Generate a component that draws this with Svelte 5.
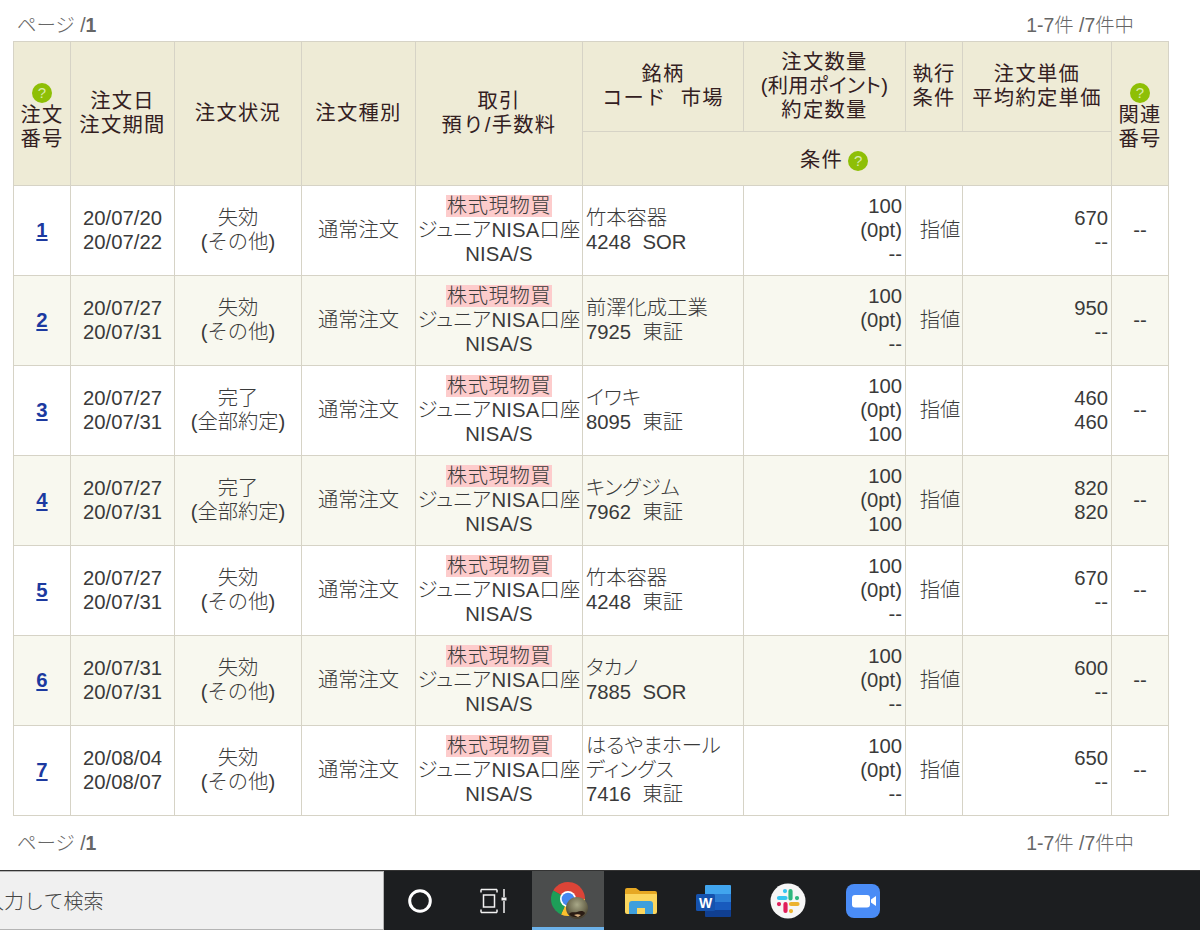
<script lang="ts">
  interface Order {
    no: number;
    from: string;
    to: string;
    status: string;
    detail: string;
    name: string;
    code: string;
    market: string;
    filled: string;
    price: string;
    avg: string;
  }

  const orders: Order[] = [
    { no: 1, from: "20/07/20", to: "20/07/22", status: "失効", detail: "(その他)", name: "竹本容器", code: "4248", market: "SOR", filled: "--", price: "670", avg: "--" },
    { no: 2, from: "20/07/27", to: "20/07/31", status: "失効", detail: "(その他)", name: "前澤化成工業", code: "7925", market: "東証", filled: "--", price: "950", avg: "--" },
    { no: 3, from: "20/07/27", to: "20/07/31", status: "完了", detail: "(全部約定)", name: "イワキ", code: "8095", market: "東証", filled: "100", price: "460", avg: "460" },
    { no: 4, from: "20/07/27", to: "20/07/31", status: "完了", detail: "(全部約定)", name: "キングジム", code: "7962", market: "東証", filled: "100", price: "820", avg: "820" },
    { no: 5, from: "20/07/27", to: "20/07/31", status: "失効", detail: "(その他)", name: "竹本容器", code: "4248", market: "東証", filled: "--", price: "670", avg: "--" },
    { no: 6, from: "20/07/31", to: "20/07/31", status: "失効", detail: "(その他)", name: "タカノ", code: "7885", market: "SOR", filled: "--", price: "600", avg: "--" },
    { no: 7, from: "20/08/04", to: "20/08/07", status: "失効", detail: "(その他)", name: "はるやまホールディングス", code: "7416", market: "東証", filled: "--", price: "650", avg: "--" },
  ];
</script>

{#snippet help()}
  <span class="help">?</span>
{/snippet}

{#snippet pager()}
  <div class="pager">
    <span>ページ /<b>1</b></span>
    <span>1-7件 /7件中</span>
  </div>
{/snippet}

<div class="page">
  <main>
    <div class="top">{@render pager()}</div>
    <table>
      <colgroup>
        <col class="c1" /><col class="c2" /><col class="c3" /><col class="c4" /><col class="c5" />
        <col class="c6" /><col class="c7" /><col class="c8" /><col class="c9" /><col class="c10" />
      </colgroup>
      <thead>
        <tr class="h1">
          <th rowspan="2" class="stack">{@render help()}注文<br />番号</th>
          <th rowspan="2">注文日<br />注文期間</th>
          <th rowspan="2">注文状況</th>
          <th rowspan="2">注文種別</th>
          <th rowspan="2">取引<br />預り/手数料</th>
          <th>銘柄<br />コード<span class="gap"></span>市場</th>
          <th>注文数量<br /><span class="tight">(利用ポイント)</span><br />約定数量</th>
          <th>執行<br />条件</th>
          <th>注文単価<br />平均約定単価</th>
          <th rowspan="2" class="stack">{@render help()}関連<br />番号</th>
        </tr>
        <tr class="h2">
          <th colspan="4" class="cond">条件{@render help()}</th>
        </tr>
      </thead>
      <tbody>
        {#each orders as o}
          <tr>
            <td class="no"><a href="#{o.no}">{o.no}</a></td>
            <td>{o.from}<br />{o.to}</td>
            <td>{o.status}<br />{o.detail}</td>
            <td>通常注文</td>
            <td class="trade"><span class="buy">株式現物買</span><br />ジュニアNISA口座<br />NISA/S</td>
            <td class="stock">{o.name}<br />{o.code}&nbsp;&nbsp;{o.market}</td>
            <td class="num">100<br />(0pt)<br />{o.filled}</td>
            <td class="exec">指値</td>
            <td class="num">{o.price}<br />{o.avg}</td>
            <td>--</td>
          </tr>
        {/each}
      </tbody>
    </table>
    <div class="bottom">{@render pager()}</div>
  </main>

  <footer class="taskbar">
    <div class="search">入力して検索</div>
    <div class="tasks">
      <div class="task">
        <svg width="24" height="24" viewBox="0 0 24 24"><circle cx="12" cy="12" r="10.300" fill="none" stroke="#fff" stroke-width="3" /></svg>
      </div>
      <div class="task">
        <svg width="28" height="26" viewBox="0 0 28 26" fill="none" stroke="#f2f2f2" stroke-width="1.500">
          <path d="M1 1.500h16M1 1.500v3M17 1.500v3M3.500 7h11v12h-11zM1 24.500h16M1 24.500v-3M17 24.500v-3M24 1v8M24 13v12" />
          <path d="M21.500 9.500h5v3h-5z" fill="#f2f2f2" stroke="none" />
        </svg>
      </div>
      <div class="task active">
        <svg width="48" height="48" viewBox="-5 -6 48 48">
          <defs>
            <radialGradient id="fur" cx="0.5" cy="0.35" r="0.7">
              <stop offset="0" stop-color="#a8a888" />
              <stop offset="0.6" stop-color="#6e6a50" />
              <stop offset="1" stop-color="#3a3226" />
            </radialGradient>
          </defs>
          <path d="M19 18L4.300 9.500A17 17 0 0 1 36 18Z" fill="#dc4437" />
          <path d="M19 18L36 18A17 17 0 0 1 12 33.500Z" fill="#fbc02d" />
          <path d="M19 18L12 33.500A17 17 0 0 1 4.300 9.500Z" fill="#1e9e58" />
          <circle cx="19" cy="18" r="8" fill="#fff" />
          <circle cx="19" cy="18" r="6.300" fill="#4688f1" />
          <circle cx="28" cy="27" r="11" fill="url(#fur)" />
          <path d="M20 33c3-3 5-1 8-2s6-2 8 1c-2 5-13 6-16 1z" fill="#2a1c14" />
          <path d="M25 34c2-1 5-1 7 0l-3 2z" fill="#d8b080" />
        </svg>
      </div>
      <div class="task">
        <svg width="34" height="28" viewBox="0 0 34 28">
          <path d="M1 3a2 2 0 0 1 2-2h9l4 3h15a2 2 0 0 1 2 2v4H1z" fill="#e6a823" />
          <path d="M1 7h31a1 1 0 0 1 1 1v17a2 2 0 0 1-2 2H3a2 2 0 0 1-2-2z" fill="#fbd65e" />
          <path d="M5 27v-10a3 3 0 0 1 3-3h18a3 3 0 0 1 3 3v10h-8v-6h-8v6z" fill="#3f9fdc" />
        </svg>
      </div>
      <div class="task">
        <svg width="36" height="34" viewBox="0 0 36 34">
          <path d="M9 2a1 1 0 0 1 1-1h24a1 1 0 0 1 1 1v8H9z" fill="#41a5ee" />
          <rect x="9" y="10" width="26" height="8" fill="#2b7cd3" />
          <rect x="9" y="18" width="26" height="8" fill="#185abd" />
          <path d="M9 26h26v6a1 1 0 0 1-1 1H10a1 1 0 0 1-1-1z" fill="#103f91" />
          <rect x="0" y="10" width="19" height="17" rx="1.500" fill="#1552ad" />
          <text x="9.500" y="23.500" class="word">W</text>
        </svg>
      </div>
      <div class="task">
        <svg width="36" height="36" viewBox="0 0 36 36">
          <circle cx="18" cy="18" r="17.500" fill="#f6f6f6" />
          <g stroke-width="4.200" stroke-linecap="round" fill="none">
            <path d="M9 15h6.500M15 8v0.100" stroke="#36c5f0" />
            <path d="M20.500 8v7.500M27 15v0.100" stroke="#2eb67d" />
            <path d="M21 21h6.500M21 28v0.100" stroke="#ecb22e" />
            <path d="M15.500 21v7M9 21v0.100" stroke="#e01e5a" />
          </g>
        </svg>
      </div>
      <div class="task">
        <svg width="34" height="34" viewBox="0 0 34 34">
          <rect width="34" height="34" rx="8" fill="#4a8cf6" />
          <rect x="6" y="11" width="18" height="12.500" rx="3" fill="#fff" />
          <path d="M25 15.500l5-3.500v10l-5-3.500z" fill="#fff" />
        </svg>
      </div>
    </div>
  </footer>
</div>

<style>
  :global(body) {
    margin: 0;
    background: #fff;
  }

  .page {
    display: flex;
    flex-direction: column;
    height: 930px;
    width: 1200px;
    overflow: hidden;
    font-family: "Liberation Sans", "Noto Sans CJK JP", sans-serif;
    color: #333;
  }

  main {
    flex: 1;
    padding-left: 13px;
  }

  .top {
    height: 41px;
    padding-top: 14px;
    box-sizing: border-box;
  }

  .bottom {
    padding-top: 16px;
  }

  .pager {
    display: flex;
    justify-content: space-between;
    width: 1117px;
    padding-left: 4px;
    font-size: 19.400px;
    line-height: 22px;
    color: #666;
    font-weight: 300;
  }

  .pager b {
    font-weight: 700;
  }

  table {
    border-collapse: collapse;
    table-layout: fixed;
    width: 1156px;
    font-size: 20.300px;
    line-height: 24px;
  }

  .c1, .c8, .c10 { width: 57px; }
  .c2 { width: 104px; }
  .c3 { width: 127px; }
  .c4 { width: 114px; }
  .c5 { width: 167px; }
  .c6 { width: 161px; }
  .c7 { width: 162px; }
  .c9 { width: 149px; }

  th, td {
    border: 1px solid #d6d3c6;
    padding: 0 0 2px;
    text-align: center;
    vertical-align: middle;
    white-space: nowrap;
  }

  th {
    background: #eeebd6;
    font-weight: 400;
    letter-spacing: 1.300px;
    color: #33201f;
  }

  td {
    font-weight: 300;
    color: #3a3a3a;
  }

  .tight {
    letter-spacing: 0.300px;
    font-feature-settings: "palt";
  }

  .gap {
    display: inline-block;
    width: 14px;
  }

  .h1 { height: 90px; }
  .h2 { height: 54px; }

  th.cond {
    padding: 3px 26px 0 0;
  }

  .cond .help {
    margin-left: 5px;
  }

  .help {
    display: inline-block;
    width: 20px;
    height: 20px;
    border-radius: 50%;
    background: #8ebf06;
    color: #d8ecae;
    font-size: 15px;
    line-height: 20px;
    font-weight: 400;
    letter-spacing: 0;
    text-align: center;
    vertical-align: text-bottom;
  }

  th.stack {
    padding-top: 8px;
  }

  .stack .help {
    display: block;
    margin: 0 auto;
  }

  tbody tr {
    height: 90px;
  }

  tbody tr:nth-child(even) td {
    background: #f8f8ef;
  }

  td a {
    color: #1c3aa0;
    font-weight: 700;
  }

  td.trade {
    font-feature-settings: "palt";
    letter-spacing: 0.200px;
  }

  .buy {
    background: #fdcccc;
    letter-spacing: 0.600px;
    padding: 0 1px;
    font-feature-settings: normal;
  }

  td.stock {
    text-align: left;
    padding-left: 3px;
    padding-right: 18px;
    white-space: normal;
    font-feature-settings: "palt";
  }

  td.num {
    text-align: right;
    padding-right: 3px;
  }

  td.exec {
    padding-left: 12px;
  }

  .taskbar {
    display: flex;
    height: 60px;
    background: #1c1e20;
    border-top: 1px solid #333;
    box-sizing: border-box;
  }

  .search {
    width: 384px;
    box-sizing: border-box;
    background: #f0f0f0;
    border: 1px solid #b4b4b4;
    border-left: none;
    text-indent: -16px;
    font-size: 20px;
    line-height: 60px;
    color: #444;
    font-weight: 300;
    overflow: hidden;
  }

  .tasks {
    display: grid;
    grid-template-columns: 72px 76px 72px 73px 73px 76px 74px;
  }

  .task {
    display: flex;
    align-items: center;
    justify-content: center;
    box-sizing: border-box;
  }

  .active {
    background: #4b4d4d;
    border-bottom: 3px solid #6cb2ea;
  }

  .word {
    font-family: "Liberation Sans", sans-serif;
    font-size: 14px;
    font-weight: 700;
    fill: #fff;
    text-anchor: middle;
  }
</style>
